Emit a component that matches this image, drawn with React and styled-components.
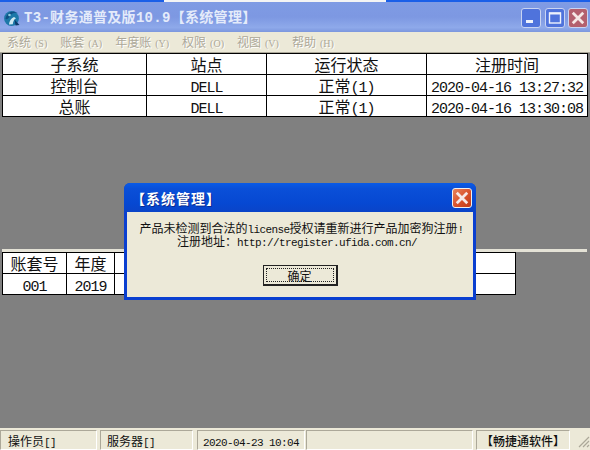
import React from "react";
import styled, { createGlobalStyle } from "styled-components";

const CJK = '"Noto Sans CJK SC", sans-serif';
const LATIN = '"Liberation Mono", "Noto Sans CJK SC", monospace';

const GlobalStyle = createGlobalStyle`
  html, body { margin: 0; padding: 0; background: #808080; }
  body { font-family: ${CJK}; }
`;

const Page = styled.div`
  position: relative;
  width: 590px;
  height: 450px;
  overflow: hidden;
  display: flex;
  flex-direction: column;
  background: #808080;
`;

const TopEdge = styled.div`
  display: flex;
  height: 2px;
  flex: none;
`;
const EdgePiece = styled.div`
  width: ${(p) => p.$w}px;
  flex: ${(p) => (p.$w ? "none" : 1)};
  background: ${(p) => p.$c};
`;

const TitleBar = styled.div`
  height: 30px;
  flex: none;
  box-sizing: border-box;
  display: flex;
  align-items: center;
  padding: 2px 2px 0 3px;
  background: linear-gradient(180deg, #7f9be4 0%, #7d98e2 50%, #8ea9ea 85%, #7c97de 100%);
`;
const AppIcon = styled.svg`
  width: 18px;
  height: 18px;
  flex: none;
`;
const TitleText = styled.div`
  flex: 1;
  margin-left: 3px;
  font: bold 14px/18px ${LATIN};
  letter-spacing: 0.3px;
  color: #e4ebfa;
  white-space: nowrap;
`;
const WinButton = styled.div`
  width: 20px;
  height: 20px;
  margin-left: ${(p) => p.$gap}px;
  box-sizing: border-box;
  border: 1px solid #c9d4f2;
  border-radius: 3px;
  background: ${(p) => p.$c};
  display: flex;
  align-items: center;
  justify-content: center;
`;

const MenuBar = styled.div`
  height: 21px;
  flex: none;
  box-sizing: border-box;
  display: flex;
  align-items: center;
  padding-left: 7px;
  gap: 13px;
  background: #ece9d8;
  border-bottom: 1px solid #aca899;
`;
const MenuItem = styled.div`
  font: 12px/20px ${CJK};
  color: #aca899;
  text-shadow: 1px 1px 0 #fff;
  white-space: nowrap;
  & > span {
    margin-left: 4px;
    font: 10px/0 "Liberation Serif", serif;
  }
`;

const Grid = styled.table`
  flex: none;
  margin-left: 2px;
  width: ${(p) => p.$w}px;
  table-layout: fixed;
  border-collapse: collapse;
  background: #fff;
  border: 1px solid #000;
  td {
    height: 20px;
    padding: 0;
    border: 1px solid #000;
    text-align: center;
    color: #111;
    font: 16px/20px ${CJK};
    white-space: nowrap;
    overflow: hidden;
  }
`;
const Latin = styled.span`
  font: 15px/0 ${LATIN};
  letter-spacing: -1px;
`;

const Spacer = styled.div`
  height: ${(p) => p.$h}px;
  flex: none;
`;
const Splitter = styled.div`
  height: 3px;
  flex: none;
  margin: 0 3px 0 2px;
  background: #e4e2d6;
`;
const Fill = styled.div`
  flex: 1;
`;

const StatusBar = styled.div`
  height: 22px;
  flex: none;
  display: flex;
  align-items: stretch;
  padding-top: 2px;
  box-sizing: border-box;
  background: #ece9d8;
`;
const Pane = styled.div`
  width: ${(p) => p.$w}px;
  margin-right: ${(p) => p.$gap || 0}px;
  flex: none;
  box-sizing: border-box;
  padding-left: ${(p) => p.$pad || 0}px;
  text-align: ${(p) => (p.$center ? "center" : "left")};
  border: 1px solid;
  border-color: #aca899 #fff #fff #aca899;
  font: ${(p) => (p.$strong ? 500 : 400)} 12px/19px ${CJK};
  color: #111;
  white-space: nowrap;
  overflow: hidden;
`;
const PaneLatin = styled.span`
  font: 11px/0 ${LATIN};
  letter-spacing: -0.6px;
`;
const Grip = styled.svg`
  width: 14px;
  height: 14px;
  flex: none;
  margin: 4px 0 0 auto;
`;

const Dialog = styled.div`
  position: absolute;
  left: 124px;
  top: 183px;
  width: 352px;
  height: 117px;
  box-sizing: border-box;
  display: flex;
  flex-direction: column;
  background: #0a3fd0;
  border-radius: 6px 6px 0 0;
  padding: 0 3px 3px;
`;
const DialogHead = styled.div`
  height: 29px;
  flex: none;
  margin: 0 -3px;
  padding: 0 4px 0 7px;
  display: flex;
  align-items: center;
  border-radius: 6px 6px 0 0;
  background: linear-gradient(180deg, #0a5be6 0%, #0a4fd8 20%, #0648d2 70%, #0a44c8 100%);
`;
const DialogTitle = styled.div`
  flex: 1;
  font: bold 14px/18px ${CJK};
  letter-spacing: 1px;
  color: #fff;
  text-shadow: 1px 1px 0 #0a2a90;
`;
const CloseButton = styled(WinButton)`
  border-color: #f0f0f0;
  background: linear-gradient(135deg, #e8835c 0%, #d8502a 55%, #c03c1a 100%);
`;
const DialogBody = styled.div`
  flex: 1;
  display: flex;
  flex-direction: column;
  align-items: center;
  background: #ece9d8;
  padding-top: 9px;
`;
const Message = styled.div`
  font: 12px/13px ${CJK};
  color: #111;
  white-space: nowrap;
  text-align: center;
  margin-left: ${(p) => p.$shift || 0}px;
`;
const MessageLatin = styled.span`
  font: 11px/0 ${LATIN};
  letter-spacing: -0.6px;
`;
const OkButton = styled.div`
  width: 75px;
  height: 21px;
  margin-top: 18px;
  box-sizing: border-box;
  border: 1px solid #222;
  border-right-width: 2px;
  border-bottom-width: 2px;
  background: #ece9d8;
  padding: 2px;
  & > div {
    height: 100%;
    box-sizing: border-box;
    border: 1px dotted #222;
    font: 12px/13px ${CJK};
    text-align: center;
    color: #111;
  }
`;

const Rows1 = [
  ["控制台", "DELL", "2020-04-16 13:27:32"],
  ["总账", "DELL", "2020-04-16 13:30:08"],
];

function Logo() {
  return (
    <AppIcon viewBox="0 0 18 18">
      <circle cx="8.5" cy="9.5" r="7.4" fill="#1c78a8" />
      <path d="M2.5 10c.6-4.6 4-7.6 8-7.6 1.8 0 3.2.7 4.2 1.8-3-1-5.8 0-7.6 2.8-1.2 2-2.6 3.6-4.6 3z" fill="#0f4f84" />
      <path d="M6 15.5c.2-3 2-6.2 5-7.5l2 1.2c-2 1.2-3 3.400-3.200 6z" fill="#cfe9f2" />
      <path d="M11.500 10.500l5 5.500-4 .5z" fill="#0c3a6a" />
      <circle cx="6.500" cy="6" r="1.300" fill="#8fd0e4" />
    </AppIcon>
  );
}

function CloseX({ size }) {
  return (
    <svg width={size} height={size} viewBox="0 0 12 12">
      <path d="M1.500 1.500l9 9M10.500 1.500l-9 9" stroke="#f6e8e6" strokeWidth="2.400" fill="none" />
    </svg>
  );
}

export default function App() {
  return (
    <Page>
      <GlobalStyle />
      <TopEdge>
        <EdgePiece $w={164} $c="#1a5fe8" />
        <EdgePiece $w={222} $c="#f4f4f4" />
        <EdgePiece $c="#1a5fe8" />
      </TopEdge>
      <TitleBar>
        <Logo />
        <TitleText>T3-财务通普及版10.9【系统管理】</TitleText>
        <WinButton $c="#4f73dc">
          <svg width="12" height="12" viewBox="0 0 12 12"><rect x="1" y="8" width="7" height="3" fill="#eef2fc" /></svg>
        </WinButton>
        <WinButton $gap={4} $c="#4f73dc">
          <svg width="14" height="14" viewBox="0 0 14 14"><rect x="1.500" y="2" width="11" height="10" fill="none" stroke="#eef2fc" strokeWidth="1.400" /><rect x="1" y="1.500" width="12" height="2" fill="#eef2fc" /></svg>
        </WinButton>
        <WinButton $gap={3} $c="#b4606e">
          <CloseX size={14} />
        </WinButton>
      </TitleBar>
      <MenuBar>
        <MenuItem>系统<span>(S)</span></MenuItem>
        <MenuItem>账套<span>(A)</span></MenuItem>
        <MenuItem>年度账<span>(Y)</span></MenuItem>
        <MenuItem>权限<span>(O)</span></MenuItem>
        <MenuItem>视图<span>(V)</span></MenuItem>
        <MenuItem>帮助<span>(H)</span></MenuItem>
      </MenuBar>

      <Grid $w={585}>
        <colgroup>
          <col width="144" />
          <col width="120" />
          <col width="160" />
          <col width="161" />
        </colgroup>
        <tbody>
          <tr>
            <td>子系统</td>
            <td>站点</td>
            <td>运行状态</td>
            <td>注册时间</td>
          </tr>
          {Rows1.map((row) => (
            <tr key={row[0]}>
              <td>{row[0]}</td>
              <td><Latin>{row[1]}</Latin></td>
              <td>正常<Latin>(1)</Latin></td>
              <td><Latin>{row[2]}</Latin></td>
            </tr>
          ))}
        </tbody>
      </Grid>

      <Spacer $h={132} />
      <Splitter />
      <Grid $w={513}>
        <colgroup>
          <col width="64" />
          <col width="48" />
          <col width="401" />
        </colgroup>
        <tbody>
          <tr>
            <td>账套号</td>
            <td>年度</td>
            <td />
          </tr>
          <tr>
            <td><Latin>001</Latin></td>
            <td><Latin>2019</Latin></td>
            <td />
          </tr>
        </tbody>
      </Grid>
      <Fill />

      <StatusBar>
        <Pane $w={97} $gap={3} $pad={7}>操作员<PaneLatin>[]</PaneLatin></Pane>
        <Pane $w={93} $gap={4} $pad={6}>服务器<PaneLatin>[]</PaneLatin></Pane>
        <Pane $w={108} $gap={1} $pad={5}><PaneLatin>2020-04-23 10:04</PaneLatin></Pane>
        <Pane $w={167} $gap={3} />
        <Pane $w={94} $center $strong>【畅捷通软件】</Pane>
        <Grip viewBox="0 0 14 14">
          <path d="M13 3L3 13M13 7L7 13M13 11l-2 2" stroke="#aca899" strokeWidth="1.200" fill="none" />
        </Grip>
      </StatusBar>

      <Dialog>
        <DialogHead>
          <DialogTitle>【系统管理】</DialogTitle>
          <CloseButton>
            <CloseX size={14} />
          </CloseButton>
        </DialogHead>
        <DialogBody>
          <Message $shift={3}>产品未检测到合法的<MessageLatin>license</MessageLatin>授权请重新进行产品加密狗注册<MessageLatin>!</MessageLatin></Message>
          <Message $shift={-6}>注册地址：<MessageLatin>http://tregister.ufida.com.cn/</MessageLatin></Message>
          <OkButton><div>确定</div></OkButton>
        </DialogBody>
      </Dialog>
    </Page>
  );
}
